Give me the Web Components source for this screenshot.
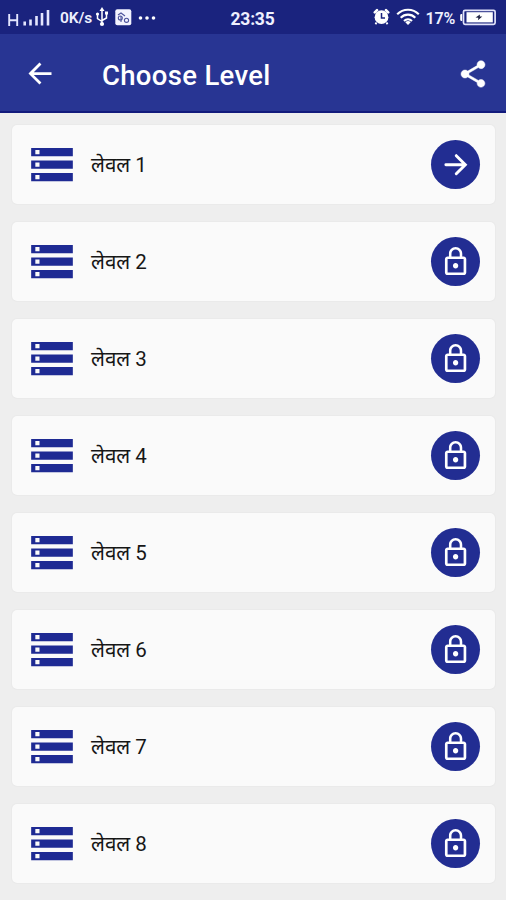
<!DOCTYPE html>
<html lang="hi">
<head>
<meta charset="utf-8">
<title>Choose Level</title>
<style>
html,body{margin:0;padding:0}
body{width:506px;height:900px;overflow:hidden;background:#eeeeee;font-family:Roboto,"Noto Sans",sans-serif}
</style>
</head>
<body>
<level-screen></level-screen>
<script>
function define(name, html) {
  const t = document.createElement('template');
  t.innerHTML = html;
  customElements.define(name, class extends HTMLElement {
    connectedCallback() {
      if (this.shadowRoot) return;
      this.attachShadow({mode: 'open'}).appendChild(t.content.cloneNode(true));
    }
  });
}

define('status-bar', `
<style>
:host{display:flex;box-sizing:border-box;height:34px;background:#1a237e;color:#eef0ff;padding:0 9px 0 8px;align-items:center;font-size:16px;line-height:20px}
svg{display:block;flex:none}
.side{display:flex;align-items:center;flex:1 1 0;height:34px}
.right{justify-content:flex-end}
.speed{font-weight:600;font-size:15.5px;width:33px;margin-left:10px;letter-spacing:-.1px;white-space:nowrap;padding-top:2px}
.time{font-weight:700;font-size:17.5px;letter-spacing:-.2px;padding-top:3px}
.pct{font-weight:600;font-size:16px;margin:3px 4px 0 6px;letter-spacing:-.2px}
</style>
<div class="side">
  <svg width="42" height="18" viewBox="0 0 42 18" fill="none" stroke="#e4e6ff" style="margin-top:1px">
    <path d="M1.2 5v12M9.2 5v12M1.2 11.2h8" stroke-width="1.9"/>
    <path d="M16.7 16.5v-4M22.5 16.5v-6M28.5 16.5v-9.5M34 16.5V4M40 16.5V1" stroke-width="2.6"/>
  </svg>
  <span class="speed">0K/s</span>
  <svg width="14" height="20" viewBox="0 0 14 20" style="margin-left:2px">
    <path d="M7 3v14M2.5 7v4.5L7 14.5M11.5 6.5V11L7 13.5" fill="none" stroke="#fff" stroke-width="1.5"/>
    <path d="M7 0l2.5 4h-5zM10 4.5h3v3h-3z" fill="#fff"/><circle cx="2.5" cy="7" r="1.6" fill="#fff"/><circle cx="7" cy="17" r="2.1" fill="#fff"/>
  </svg>
  <svg width="17" height="17" viewBox="0 0 17 17" style="margin-left:6px;margin-top:1px">
    <rect x=".3" y=".3" width="16" height="16" rx="2" fill="#f3f3ff"/>
    <g fill="none" stroke="#4c529c" stroke-width="1.1"><circle cx="11.5" cy="11.3" r="2.1"/><circle cx="5.3" cy="9" r="2"/><path d="M3 6l3-2 4 3M6 7v6"/></g>
  </svg>
  <svg width="18" height="6" viewBox="0 0 18 6" style="margin-left:6px;margin-top:1px" fill="#fff"><circle cx="2.5" cy="3" r="1.8"/><circle cx="9" cy="3" r="1.8"/><circle cx="15.5" cy="3" r="1.8"/></svg>
</div>
<div class="time">23:35</div>
<div class="side right">
  <svg width="17" height="18" viewBox="0 0 17 18">
    <circle cx="8.5" cy="9.2" r="6.9" fill="#fff"/>
    <path d="M1.8 4.4L4 2.2M15.2 4.4L13 2.2" stroke="#fff" stroke-width="2.6" stroke-linecap="round"/>
    <path d="M3.5 14.5L2.5 16.3M13.5 14.5l1 1.8" stroke="#fff" stroke-width="1.8"/>
    <path d="M8.5 5v5H12" fill="none" stroke="#1a237e" stroke-width="1.5"/>
  </svg>
  <svg width="24" height="18" viewBox="0 0 24 18" style="margin-left:6px">
    <g fill="none" stroke="#fff" stroke-width="2.1"><path d="M1.2 6.3a15 15 0 0 1 21.6 0M4.7 9.7a10.3 10.3 0 0 1 14.6 0M8 13a5.8 5.8 0 0 1 8 0"/></g>
    <path d="M9.3 14.3a4 4 0 0 1 5.4 0L12 17z" fill="#fff"/>
  </svg>
  <span class="pct">17%</span>
  <svg width="38" height="17" viewBox="0 0 38 17">
    <path d="M3.2 5v7H2.5A1.3 1.3 0 0 1 1.2 10.8V6.3A1.3 1.3 0 0 1 2.5 5z" fill="#fff"/>
    <rect x="4.5" y="1.3" width="31.6" height="14" rx="1.5" fill="none" stroke="#e2e3fa" stroke-width="1.7"/>
    <rect x="7.5" y="3.2" width="26.3" height="10.2" fill="#fff"/>
    <path d="M16.5 8.5l4.5-3-.3 2h2.6L18.9 11.3l.5-2.6z" fill="#1b1f40"/>
  </svg>
</div>`);

define('app-bar', `
<style>
:host{display:flex;align-items:center;box-sizing:border-box;height:79px;padding:2px 17px 0 24px;background:#283593;border-bottom:2px solid #121a7c;color:#fff}
svg{display:block;flex:none}
h1{margin:0 0 0 45px;flex:1;font-size:27.5px;font-weight:500;letter-spacing:.32px;line-height:34px;padding-top:4px;white-space:nowrap}
</style>
<svg width="33" height="33" viewBox="0 0 24 24" fill="#fff"><path d="M20 11H7.1l5.59-5.59L11.27 4l-8 8 8 8 1.41-1.41L7.1 13H20v-2z"/></svg>
<h1><slot></slot></h1>
<svg width="32" height="32" viewBox="0 0 24 24" fill="#fff" stroke="#fff" stroke-width=".35"><path d="M18 16.08c-.76 0-1.44.3-1.96.77L8.91 12.7c.05-.23.09-.46.09-.7s-.04-.47-.09-.7l7.05-4.11c.54.5 1.25.81 2.04.81 1.66 0 3-1.34 3-3s-1.34-3-3-3-3 1.34-3 3c0 .24.04.47.09.7L8.04 9.81C7.5 9.31 6.79 9 6 9c-1.66 0-3 1.34-3 3s1.34 3 3 3c.79 0 1.5-.31 2.04-.81l7.12 4.16c-.05.21-.08.43-.08.65 0 1.61 1.31 2.92 2.92 2.92s2.92-1.31 2.92-2.92-1.31-2.92-2.92-2.92z"/></svg>`);

define('storage-icon', `
<style>:host{display:block;width:50px;height:50px}svg{display:block}</style>
<svg width="50" height="50" viewBox="0 0.15 24 24" fill="#1e2a93"><path d="M2 20h20v-4H2v4zm2-3h2v2H4v-2zM2 4v4h20V4H2zm4 3H4V5h2v2zm-4 7h20v-4H2v4zm2-3h2v2H4v-2z"/></svg>`);

const badge = inner => `
<style>:host{display:flex;width:49px;height:49px;border-radius:50%;background:#222d92;align-items:center;justify-content:center}svg{display:block}</style>
<svg width="32" height="32" viewBox="0.3 0.2 24 24">${inner}</svg>`;
define('open-badge', badge('<path d="M4.7 12H18.8M12.5 5.2l6.8 6.8-6.8 6.8" fill="none" stroke="#fff" stroke-width="2.2" stroke-linecap="round"/>'));
define('lock-badge', badge('<path fill="#fff" d="M12 17c1.1 0 2-.9 2-2s-.9-2-2-2-2 .9-2 2 .9 2 2 2zm6-9h-1V6c0-2.76-2.24-5-5-5S7 3.24 7 6v2H6c-1.1 0-2 .9-2 2v10c0 1.1.9 2 2 2h12c1.1 0 2-.9 2-2V10c0-1.1-.9-2-2-2zM8.9 6c0-1.71 1.39-3.1 3.1-3.1s3.1 1.39 3.1 3.1v2H8.9V6zM18 20H6V10h12v10z"/>'));

define('level-card', `
<style>
:host{display:flex;align-items:center;box-sizing:border-box;height:79px;padding:0 15px;background:#fafafa;border-radius:5px;box-shadow:0 0 2px rgba(0,0,0,.07);color:#161616}
.label{flex:1;margin-left:14px;font-size:20.5px;line-height:28px;white-space:nowrap}
</style>
<storage-icon></storage-icon><span class="label"><slot></slot></span><slot name="action"></slot>`);

define('level-screen', `
<style>
:host{display:flex;flex-direction:column;width:506px;height:900px;background:#eeeeee}
main{display:flex;flex-direction:column;gap:18px;padding:12px 11px 0 12px}
</style>
<status-bar></status-bar>
<app-bar>Choose Level</app-bar>
<main>${[1,2,3,4,5,6,7,8].map(n => `<level-card>लेवल ${n}${n === 1 ? '<open-badge slot="action"></open-badge>' : '<lock-badge slot="action"></lock-badge>'}</level-card>`).join('')}</main>`);
</script>
</body>
</html>
